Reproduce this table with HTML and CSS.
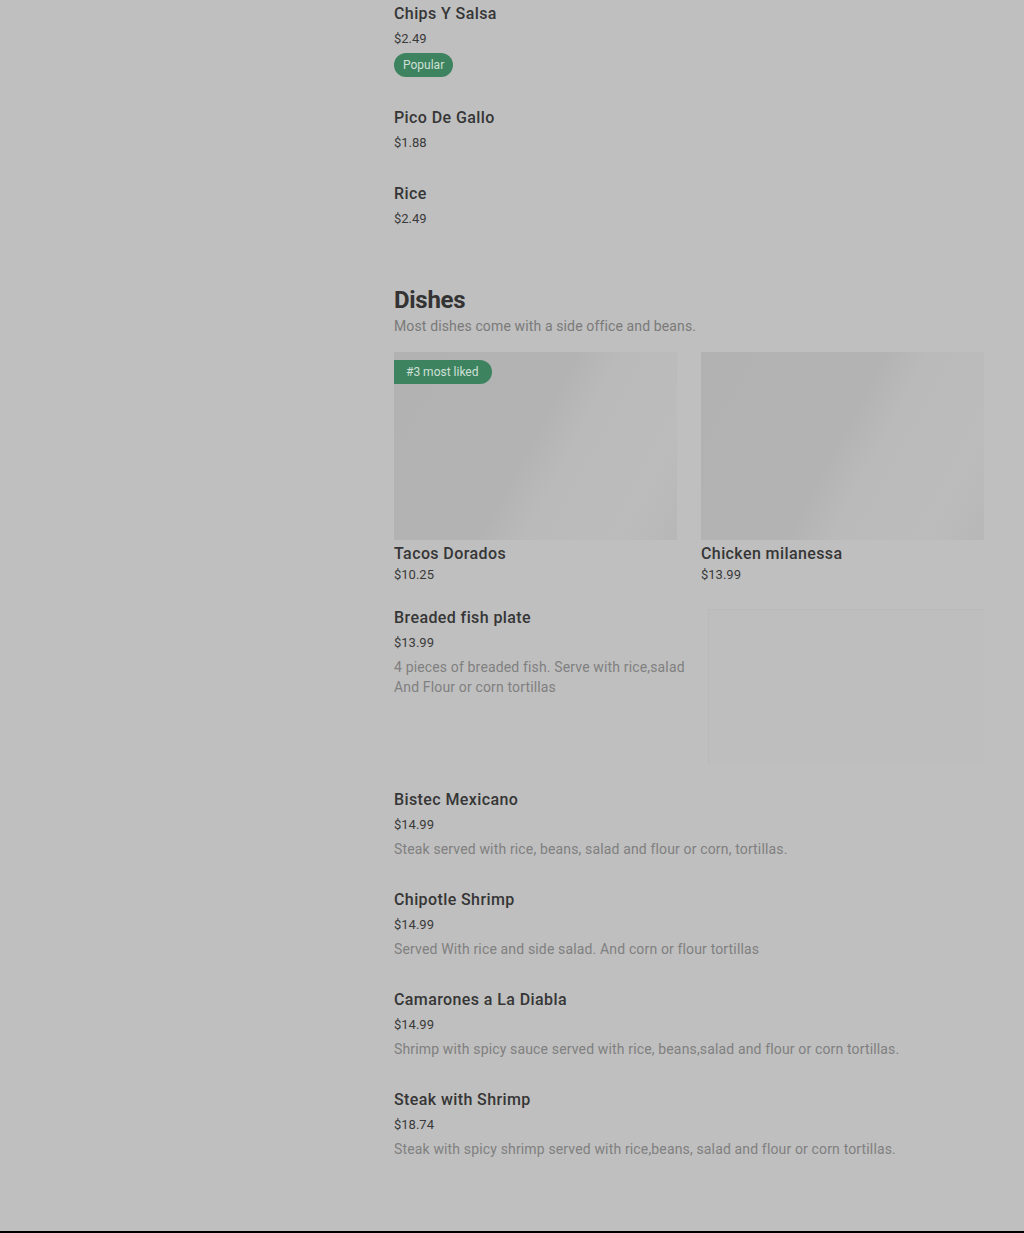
FILE: index.html
```html
<!DOCTYPE html>
<html lang="en">
<head>
  <meta charset="UTF-8">
  <title>Menu</title>
  <link rel="stylesheet" href="styles.css">
</head>
<body>
  <div class="page">
    <aside class="sidebar"></aside>

    <main class="menu">
      <!-- Sides -->
      <section class="section">
        <div class="item">
          <div class="item-name">Chips Y Salsa</div>
          <div class="item-price">$2.49</div>
          <span class="pill">Popular</span>
        </div>
        <div class="item">
          <div class="item-name">Pico De Gallo</div>
          <div class="item-price">$1.88</div>
        </div>
        <div class="item">
          <div class="item-name">Rice</div>
          <div class="item-price">$2.49</div>
        </div>
      </section>

      <!-- Dishes -->
      <section class="section dishes">
        <h2 class="section-title">Dishes</h2>
        <p class="section-sub">Most dishes come with a side office and beans.</p>

        <div class="cards">
          <div class="card">
            <div class="card-img skeleton">
              <span class="rank">#3 most liked</span>
            </div>
            <div class="card-name">Tacos Dorados</div>
            <div class="card-price">$10.25</div>
          </div>
          <div class="card">
            <div class="card-img skeleton"></div>
            <div class="card-name">Chicken milanessa</div>
            <div class="card-price">$13.99</div>
          </div>
        </div>

        <div class="item with-img">
          <div class="item-text">
            <div class="item-name">Breaded fish plate</div>
            <div class="item-price">$13.99</div>
            <div class="item-desc">4 pieces of breaded fish. Serve with rice,salad And Flour or corn tortillas</div>
          </div>
          <div class="item-img"></div>
        </div>

        <div class="item">
          <div class="item-name">Bistec Mexicano</div>
          <div class="item-price">$14.99</div>
          <div class="item-desc">Steak served with rice, beans, salad and flour or corn, tortillas.</div>
        </div>
        <div class="item">
          <div class="item-name">Chipotle Shrimp</div>
          <div class="item-price">$14.99</div>
          <div class="item-desc">Served With rice and side salad. And corn or flour tortillas</div>
        </div>
        <div class="item">
          <div class="item-name">Camarones a La Diabla</div>
          <div class="item-price">$14.99</div>
          <div class="item-desc">Shrimp with spicy sauce served with rice, beans,salad and flour or corn tortillas.</div>
        </div>
        <div class="item">
          <div class="item-name">Steak with Shrimp</div>
          <div class="item-price">$18.74</div>
          <div class="item-desc">Steak with spicy shrimp served with rice,beans, salad and flour or corn tortillas.</div>
        </div>
      </section>
    </main>
  </div>

  <footer class="footer"></footer>
</body>
</html>
```

FILE: styles.css
```css
body {
  margin: 0;
  padding-top: 1px;
  font-family: Roboto, "Liberation Sans", sans-serif;
  background: #bfbfbf;
  color: #333;
}
.page {
  display: grid;
  grid-template-columns: 394px 590px;
  padding-bottom: 44px;
}
.menu {
  display: flex;
  flex-direction: column;
}
.item {
  display: flex;
  flex-direction: column;
  padding-top: 1px;
  padding-bottom: 26px;
}
.item-name {
  font-size: 16px;
  font-weight: 500;
  line-height: 24px;
  letter-spacing: 0.4px;
  color: #363636;
}
.item-price {
  font-size: 13px;
  line-height: 24px;
  margin-top: 1px;
  color: #3a3a3a;
}
.item-desc {
  font-size: 14px;
  line-height: 20px;
  letter-spacing: 0.15px;
  margin: 2px 0 2px;
  color: #808080;
}
.pill {
  align-self: flex-start;
  margin: 2px 0 2px;
  height: 24px;
  line-height: 24px;
  padding: 0 9px;
  border-radius: 12px;
  background: #3d8360;
  color: #cfe0d6;
  font-size: 12px;
}
.dishes {
  margin-top: 27px;
}
.section-title {
  margin: 0;
  font-size: 24px;
  line-height: 32px;
  font-weight: 700;
  letter-spacing: -0.3px;
  color: #333;
}
.section-sub {
  margin: 0;
  font-size: 14px;
  line-height: 20px;
  letter-spacing: 0.13px;
  color: #7a7a7a;
}
.cards {
  display: grid;
  grid-template-columns: 1fr 1fr;
  gap: 24px;
  margin-top: 16px;
  margin-bottom: 20px;
}
.card-img {
  position: relative;
  height: 188px;
  margin-bottom: 3px;
}
.skeleton {
  background: linear-gradient(118deg, #b2b2b2 0%, #b3b3b3 48%, #bababa 60%, #bcbcbc 85%, #b7b7b7 100%);
}
.rank {
  position: absolute;
  top: 8px;
  left: 0;
  height: 24px;
  line-height: 24px;
  padding: 0 13px 0 12px;
  border-radius: 0 12px 12px 0;
  background: #3d8360;
  color: #cfe0d6;
  font-size: 12px;
}
.card-name {
  font-size: 16px;
  font-weight: 500;
  line-height: 22px;
  letter-spacing: 0.4px;
  color: #363636;
}
.card-price {
  font-size: 13px;
  line-height: 20px;
  color: #3a3a3a;
}
.with-img {
  flex-direction: row;
  gap: 16px;
  padding-bottom: 22px;
}
.item-text {
  flex: 1;
  display: flex;
  flex-direction: column;
}
.item-img {
  width: 276px;
  height: 156px;
  margin-top: 3px;
  background: #bebebe;
  box-shadow: inset 1px 1px 0 #b9b9b9;
}
.footer {
  height: 20px;
  background: #000;
}
```
